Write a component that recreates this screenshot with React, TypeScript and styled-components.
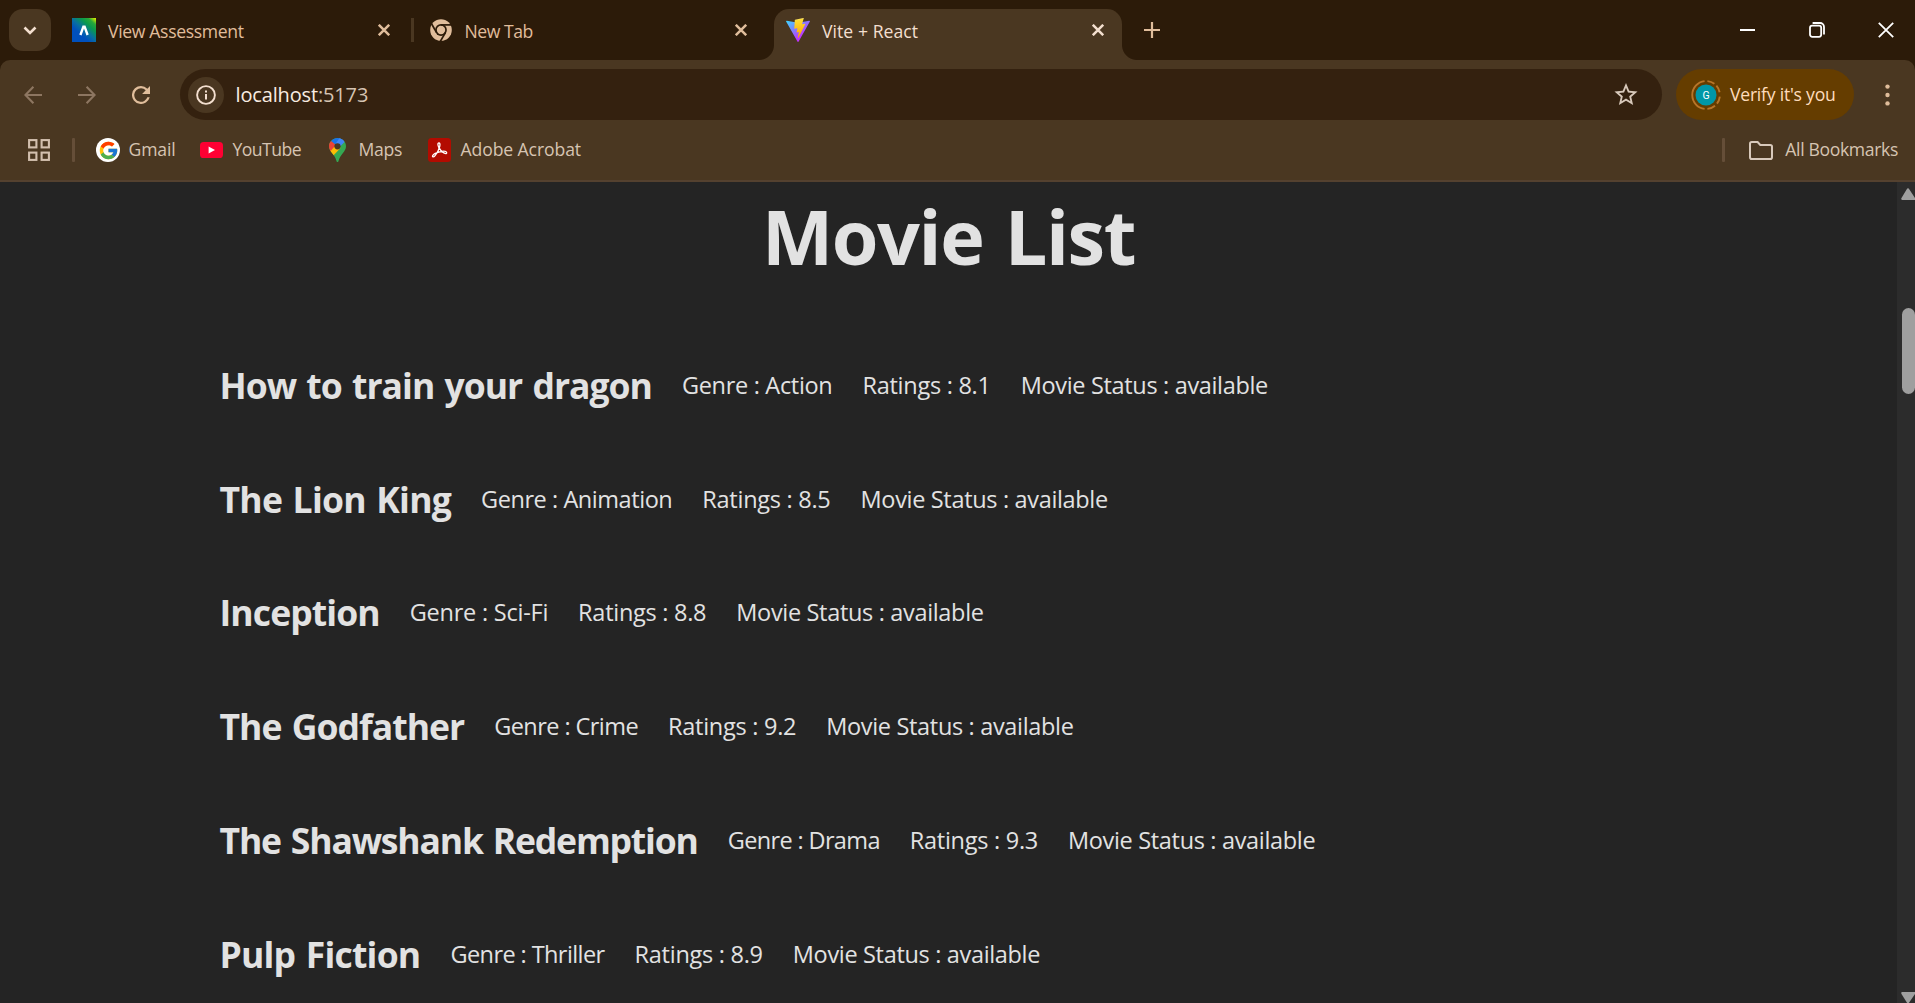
import React from 'react';
import styled, { createGlobalStyle } from 'styled-components';
import { FcGoogle } from 'react-icons/fc';

const GlobalStyle = createGlobalStyle`
  * { box-sizing: border-box; }
  body {
    margin: 0;
    background: #242424;
    font-family: "Open Sans", "Noto Sans", sans-serif;
    overflow: hidden;
  }
  svg { display: block; flex: none; }
`;

const Browser = styled.div`
  display: flex;
  flex-direction: column;
  width: 1915px;
  height: 1003px;
  overflow: hidden;
  background: #2c1b09;
`;

const TabStrip = styled.div`
  display: flex;
  align-items: flex-start;
  height: 60px;
  padding: 9px 0 0 9px;
  flex: none;
`;

const TabSearch = styled.div`
  display: flex;
  align-items: center;
  justify-content: center;
  width: 42px;
  height: 42px;
  border-radius: 14px;
  background: #4a3721;
`;

const Tab = styled.div<{ $active?: boolean; $width: number; $indent: number }>`
  position: relative;
  display: flex;
  align-items: center;
  width: ${(p) => p.$width}px;
  height: 51px;
  margin-left: ${(p) => (p.$active ? 9 : 0)}px;
  padding: 0 18px 9px ${(p) => p.$indent}px;
  border-radius: 15px 15px 0 0;
  background: ${(p) => (p.$active ? '#4a3721' : 'transparent')};
  color: ${(p) => (p.$active ? '#f3dfcf' : '#e0bd9b')};
`;

const TabFoot = styled.i<{ $side: 'left' | 'right' }>`
  position: absolute;
  bottom: 0;
  ${(p) => p.$side}: -15px;
  width: 15px;
  height: 15px;
  background: radial-gradient(
    circle at ${(p) => (p.$side === 'left' ? '0 0' : '100% 0')},
    transparent 14.5px,
    #4a3721 15.5px
  );
`;

const TabTitle = styled.span<{ $track: number; $gap?: number }>`
  flex: 1;
  margin-left: ${(p) => p.$gap ?? 12}px;
  padding-top: 1px;
  font-size: 17.6px;
  line-height: 24px;
  letter-spacing: ${(p) => p.$track}px;
  white-space: nowrap;
`;

const TabDivider = styled.div`
  width: 3px;
  height: 24px;
  margin: 9px 0 0 3px;
  background: #4a3721;
`;

const NewTabButton = styled.div`
  padding: 13px 0 0 22px;
  color: #e0bd9b;
`;

const WindowControls = styled.div`
  display: flex;
  align-items: center;
  gap: 53px;
  height: 42px;
  margin-left: auto;
  padding: 0 21px 1px 0;
`;

const Chrome = styled.div`
  flex: none;
  height: 122px;
  border-radius: 10px 10px 0 0;
  border-bottom: 2px solid #54412f;
  background: #4a3721;
`;

const Toolbar = styled.div`
  display: flex;
  align-items: center;
  height: 69px;
  padding: 9px 0 9px 24px;
`;

const NavButtons = styled.div`
  display: flex;
  align-items: center;
  gap: 36px;
  width: 156px;
`;

const Omnibox = styled.div`
  display: flex;
  align-items: center;
  width: 1482px;
  height: 51px;
  padding: 0 24px 0 7px;
  border-radius: 26px;
  background: #34210f;
  color: #d8c9bb;
`;

const SiteInfo = styled.div`
  display: flex;
  align-items: center;
  justify-content: center;
  width: 36px;
  height: 36px;
  margin-left: 0.5px;
  border-radius: 50%;
  background: #4a3721;
`;

const Address = styled.span`
  flex: 1;
  margin-left: 12px;
  font-size: 20px;
  line-height: 27px;
  letter-spacing: -0.15px;
  color: #d6c4b2;
`;

const Host = styled.span`
  color: #f8ece1;
`;

const VerifyPill = styled.div`
  display: flex;
  align-items: center;
  width: 178px;
  height: 51px;
  margin: 0 31px 0 13.5px;
  padding-left: 15.5px;
  border-radius: 26px;
  background: #653d00;
  color: #ffdcbc;
`;

const VerifyText = styled.span`
  margin-left: 9px;
  padding-bottom: 2px;
  font-size: 17.6px;
  letter-spacing: -0.23px;
  white-space: nowrap;
`;

const BookmarksBar = styled.div`
  display: flex;
  align-items: center;
  height: 42px;
  padding: 0 17px 0 28px;
`;

const BarDivider = styled.div<{ $margin: string }>`
  width: 3px;
  height: 24px;
  margin: ${(p) => p.$margin};
  border-radius: 1px;
  background: #654e38;
`;

const Bookmark = styled.div<{ $width?: number; $gap: number }>`
  display: flex;
  align-items: center;
  gap: ${(p) => p.$gap}px;
  width: ${(p) => (p.$width ? `${p.$width}px` : 'auto')};
  color: #d6c4b2;
`;

const BookmarkLabel = styled.span<{ $track: number }>`
  padding-bottom: 2px;
  font-size: 17.6px;
  line-height: 24px;
  letter-spacing: ${(p) => p.$track}px;
  white-space: nowrap;
`;

const GoogleBadge = styled.span`
  display: flex;
  align-items: center;
  justify-content: center;
  width: 24px;
  height: 24px;
  border-radius: 50%;
  background: #fff;
`;

const Spacer = styled.div`
  flex: 1;
`;

const Viewport = styled.div`
  display: flex;
  flex: 1;
  min-height: 0;
  background: #242424;
`;

const Page = styled.main`
  flex: 1;
  overflow: hidden;
  padding-top: 12px;
  color: #e2e2e2;
`;

const Heading = styled.h1`
  margin: 0 0 49.5px;
  font-size: 75.5px;
  font-weight: 700;
  line-height: 84.5px;
  letter-spacing: -1.4px;
  word-spacing: 3px;
  text-align: center;
`;

const MovieRow = styled.section`
  display: flex;
  align-items: center;
  gap: 30px;
  height: 113.76px;
  padding-left: 219.5px;
  white-space: nowrap;
`;

const MovieTitle = styled.h2<{ $track: number }>`
  margin: 0;
  font-size: 35.5px;
  font-weight: 700;
  line-height: 54px;
  letter-spacing: ${(p) => p.$track}px;
  word-spacing: 2px;
`;

const Detail = styled.p<{ $track: number }>`
  margin: 0;
  font-size: 23.5px;
  line-height: 36px;
  letter-spacing: ${(p) => p.$track}px;
`;

const Scrollbar = styled.div`
  display: flex;
  flex-direction: column;
  align-items: flex-end;
  width: 18px;
  padding-top: 6px;
  background: #2c2c2c;
`;

const ScrollThumb = styled.div`
  width: 13px;
  height: 86px;
  margin: 108px 0 auto;
  border-radius: 7px;
  background: #9f9f9f;
`;

const Cross = ({ size = 12, width = 2.5, color = 'currentColor' }) => (
  <svg width={size} height={size} viewBox={`0 0 ${size} ${size}`} stroke={color} strokeWidth={width}>
    <path d={`M.8 .8L${size - 0.8} ${size - 0.8}M${size - 0.8} .8L.8 ${size - 0.8}`} />
  </svg>
);

const AssessmentIcon = () => (
  <svg width="24" height="24" viewBox="0 0 24 24">
    <defs>
      <linearGradient id="assess" x1="0.15" y1="0.9" x2="0.95" y2="0">
        <stop offset="0.25" stopColor="#0050bd" />
        <stop offset="0.45" stopColor="#0870a0" />
        <stop offset="0.68" stopColor="#0a9a4c" />
        <stop offset="0.84" stopColor="#28a83a" />
        <stop offset="1" stopColor="#d5ec00" />
      </linearGradient>
    </defs>
    <rect width="24" height="24" fill="url(#assess)" />
    <path d="M8.4 17L11.4 8.6H12.6L15.6 17" fill="none" stroke="#fff" strokeWidth="2.4" />
  </svg>
);

const ChromeIcon = () => (
  <svg width="22" height="22" viewBox="0 0 22 22">
    <circle cx="11" cy="11" r="10.8" fill="currentColor" />
    <circle cx="11" cy="11" r="5.9" fill="#2c1b09" />
    <circle cx="11" cy="11" r="4.2" fill="currentColor" />
    <g stroke="#2c1b09" strokeWidth="1.7">
      <path d="M11 5.9H22" />
      <path d="M11 5.9H22" transform="rotate(120 11 11)" />
      <path d="M11 5.9H22" transform="rotate(240 11 11)" />
    </g>
  </svg>
);

const ViteIcon = () => (
  <svg width="24" height="24" viewBox="0 0 256 257">
    <defs>
      <linearGradient id="viteA" x1="-.828%" x2="57.636%" y1="7.652%" y2="78.411%">
        <stop offset="0%" stopColor="#41D1FF" />
        <stop offset="100%" stopColor="#BD34FE" />
      </linearGradient>
      <linearGradient id="viteB" x1="43.376%" x2="50.316%" y1="2.242%" y2="89.03%">
        <stop offset="0%" stopColor="#FFEA83" />
        <stop offset="8.333%" stopColor="#FFDD35" />
        <stop offset="100%" stopColor="#FFA800" />
      </linearGradient>
    </defs>
    <path fill="url(#viteA)" d="M255.153 37.938L134.897 252.976c-2.483 4.44-8.862 4.466-11.382.048L.875 37.958c-2.746-4.814 1.371-10.646 6.827-9.67l120.385 21.517a6.537 6.537 0 0 0 2.322-.004l117.867-21.483c5.438-.991 9.574 4.796 6.877 9.62Z" />
    <path fill="url(#viteB)" d="M185.432.063L96.44 17.501a3.268 3.268 0 0 0-2.634 3.014l-5.474 92.456a3.268 3.268 0 0 0 3.997 3.378l24.777-5.718c2.318-.535 4.413 1.507 3.936 3.838l-7.361 36.047c-.495 2.426 1.782 4.5 4.151 3.78l15.304-4.649c2.372-.72 4.652 1.36 4.15 3.788l-11.698 56.621c-.732 3.542 3.979 5.473 5.943 2.437l1.313-2.028l72.516-144.72c1.215-2.423-.88-5.186-3.54-4.672l-25.505 4.922c-2.396.462-4.435-1.77-3.759-4.114l16.646-57.705c.677-2.35-1.37-4.583-3.769-4.113Z" />
  </svg>
);

const YouTubeIcon = () => (
  <svg width="23" height="16" viewBox="0 0 23 16">
    <rect width="23" height="16" rx="3.6" fill="#ff0033" />
    <path d="M8.6 4.4L15 8L8.6 11.6Z" fill="#fff" />
  </svg>
);

const MapsIcon = () => (
  <svg width="17" height="24" viewBox="0 0 17 24">
    <defs>
      <clipPath id="pin">
        <path d="M8.5 0C3.8 0 0 3.7 0 8.3C0 11 1.3 12.9 3.2 15.2C5.5 18 6.6 19.6 7.4 22.7C7.7 23.7 8 24 8.5 24S9.3 23.7 9.6 22.7C10.4 19.6 11.5 18 13.8 15.2C15.7 12.9 17 11 17 8.3C17 3.7 13.2 0 8.5 0Z" />
      </clipPath>
    </defs>
    <g clipPath="url(#pin)">
      <rect width="17" height="24" fill="#34a853" />
      <path d="M0 13L8.5 3.5L11.5 10L3 19L0 16Z" fill="#fbbc04" />
      <path d="M-1 1.5L2.2 2.7L7 6.8L0 15Z" fill="#ea4335" />
      <path d="M2.1 2.9L5 -1H13L15 3.6L9.5 9.5L7 7Z" fill="#1a73e8" />
      <path d="M10.5 0L17 0L15.6 4L9.5 10L6.5 6Z" fill="#4285f4" />
    </g>
    <circle cx="8.5" cy="8.3" r="3.1" fill="#4a3721" />
  </svg>
);

const AcrobatIcon = () => (
  <svg width="23" height="24" viewBox="0 0 23 24" fill="none" stroke="#fff" strokeWidth="1.3" strokeLinejoin="round">
    <rect width="23" height="24" rx="3.5" fill="#b30b00" stroke="none" />
    <path d="M10.9 5C9.4 5 9.8 7.4 10.9 9.6C12.1 12 14.3 14.2 16.3 15.2C17.9 16 18.9 15.6 18.7 14.6C18.4 13.3 15 13.1 11.8 13.8C8.7 14.5 5.2 16.2 4.6 17.7C4.1 19 5.5 19.6 6.9 17.9C8.8 15.7 10.9 11.6 11.7 8.5C12.2 6.4 12 5 10.9 5Z" />
  </svg>
);

const AvatarRing = () => (
  <svg width="30" height="30" viewBox="0 0 30 30">
    <g fill="none" stroke="#b87528" strokeWidth="1.9">
      <path d="M13.6 1.1A14 14 0 0 0 13.6 28.9" />
      <path d="M16.4 1.1A14 14 0 0 1 23.4 3.8" />
      <path d="M25.4 5.6A14 14 0 0 1 28.6 12.2" />
      <path d="M28.8 16.6A14 14 0 0 1 26 23.6" />
      <path d="M24 25.7A14 14 0 0 1 16.4 28.9" />
    </g>
    <circle cx="15" cy="15" r="10.5" fill="#0097a7" />
    <text x="15" y="18.7" textAnchor="middle" fill="#fff" fontFamily="Roboto, sans-serif" fontSize="10.5">G</text>
  </svg>
);

type Movie = { title: string; track: number; genre: string; genreTrack: number; rating: string };

const movies: Movie[] = [
  { title: 'How to train your dragon', track: -0.98, genre: 'Action', genreTrack: -0.31, rating: '8.1' },
  { title: 'The Lion King', track: -0.75, genre: 'Animation', genreTrack: -0.44, rating: '8.5' },
  { title: 'Inception', track: -0.9, genre: 'Sci-Fi', genreTrack: -0.23, rating: '8.8' },
  { title: 'The Godfather', track: -0.97, genre: 'Crime', genreTrack: -0.56, rating: '9.2' },
  { title: 'The Shawshank Redemption', track: -1.18, genre: 'Drama', genreTrack: -0.64, rating: '9.3' },
  { title: 'Pulp Fiction', track: -0.78, genre: 'Thriller', genreTrack: -0.58, rating: '8.9' },
];

export default function App() {
  return (
    <Browser>
      <GlobalStyle />
      <TabStrip>
        <TabSearch>
          <svg width="14" height="9" viewBox="0 0 14 9" fill="none" stroke="#f3dfcf" strokeWidth="2.6">
            <path d="M1.5 1.5L7 7L12.5 1.5" />
          </svg>
        </TabSearch>
        <Tab $width={357} $indent={21}>
          <AssessmentIcon />
          <TabTitle $track={-0.34}>View Assessment</TabTitle>
          <Cross />
        </Tab>
        <TabDivider />
        <Tab $width={351} $indent={16}>
          <ChromeIcon />
          <TabTitle $track={-0.45} $gap={12.5}>New Tab</TabTitle>
          <Cross />
        </Tab>
        <Tab $active $width={348} $indent={12}>
          <TabFoot $side="left" />
          <ViteIcon />
          <TabTitle $track={0.05}>Vite + React</TabTitle>
          <Cross />
          <TabFoot $side="right" />
        </Tab>
        <NewTabButton>
          <svg width="16" height="16" viewBox="0 0 16 16" stroke="currentColor" strokeWidth="2.2">
            <path d="M8 0V16M0 8H16" />
          </svg>
        </NewTabButton>
        <WindowControls>
          <svg width="16" height="2" viewBox="0 0 16 2">
            <rect width="15" height="2" fill="#fff" />
          </svg>
          <svg width="16" height="16" viewBox="0 0 16 16" fill="none" stroke="#fff" strokeWidth="1.8">
            <rect x="1" y="3.6" width="11.2" height="11.2" rx="2.2" />
            <path d="M3.6 1H11A4 4 0 0 1 15 5V12.4" />
          </svg>
          <Cross size={16} width={1.8} color="#fff" />
        </WindowControls>
      </TabStrip>

      <Chrome>
        <Toolbar>
          <NavButtons>
            <svg width="18" height="18" viewBox="0 0 18 18" fill="none" stroke="#8d7661" strokeWidth="2.1">
              <path d="M18 9H1.6M9.4 .8L1.4 9L9.4 17.2" />
            </svg>
            <svg width="18" height="18" viewBox="0 0 18 18" fill="none" stroke="#8d7661" strokeWidth="2.1">
              <path d="M0 9H16.4M8.6 .8L16.6 9L8.6 17.2" />
            </svg>
            <svg width="18" height="18" viewBox="4 4 16 16" fill="#e0bd9b">
              <path d="M17.65 6.35A7.958 7.958 0 0 0 12 4a8 8 0 1 0 7.73 10h-2.08A6 6 0 1 1 12 6c1.66 0 3.14.69 4.22 1.78L13 11h7V4l-2.35 2.35z" />
            </svg>
          </NavButtons>
          <Omnibox>
            <SiteInfo>
              <svg width="20" height="20" viewBox="0 0 20 20">
                <circle cx="10" cy="10" r="8.9" fill="none" stroke="#f3dfcf" strokeWidth="1.9" />
                <path d="M9 9H11V14.6H9ZM9 5.4H11V7.5H9Z" fill="#f3dfcf" />
              </svg>
            </SiteInfo>
            <Address>
              <Host>localhost</Host>:5173
            </Address>
            <svg width="24" height="23" viewBox="1.6 2 20.8 19.8" fill="#d8c9bb">
              <path d="M22 9.24l-7.19-.62L12 2 9.19 8.63 2 9.24l5.46 4.73L5.82 21 12 17.27 18.18 21l-1.63-7.03L22 9.24zM12 15.4l-3.76 2.27 1-4.28-3.32-2.88 4.38-.38L12 6.1l1.71 4.04 4.38.38-3.32 2.88 1 4.28L12 15.4z" />
            </svg>
          </Omnibox>
          <VerifyPill>
            <AvatarRing />
            <VerifyText>Verify it's you</VerifyText>
          </VerifyPill>
          <svg width="5" height="22" viewBox="0 0 5 22" fill="#e0bd9b">
            <circle cx="2.5" cy="2.6" r="2.2" />
            <circle cx="2.5" cy="11" r="2.2" />
            <circle cx="2.5" cy="19.4" r="2.2" />
          </svg>
        </Toolbar>

        <BookmarksBar>
          <svg width="22" height="22" viewBox="0 0 22 22" fill="none" stroke="#d2bfae" strokeWidth="2.1">
            <rect x="1.1" y="1.1" width="7.3" height="7.3" />
            <rect x="13.6" y="1.1" width="7.3" height="7.3" />
            <rect x="1.1" y="13.6" width="7.3" height="7.3" />
            <rect x="13.6" y="13.6" width="7.3" height="7.3" />
          </svg>
          <BarDivider $margin="0 21px 0 22px" />
          <Bookmark $width={104} $gap={8.5}>
            <GoogleBadge>
              <FcGoogle size={21} />
            </GoogleBadge>
            <BookmarkLabel $track={-0.15}>Gmail</BookmarkLabel>
          </Bookmark>
          <Bookmark $width={129} $gap={9.5}>
            <YouTubeIcon />
            <BookmarkLabel $track={-0.55}>YouTube</BookmarkLabel>
          </Bookmark>
          <Bookmark $width={99} $gap={12.5}>
            <MapsIcon />
            <BookmarkLabel $track={-0.3}>Maps</BookmarkLabel>
          </Bookmark>
          <Bookmark $gap={9.5}>
            <AcrobatIcon />
            <BookmarkLabel $track={-0.1}>Adobe Acrobat</BookmarkLabel>
          </Bookmark>
          <Spacer />
          <BarDivider $margin="0 24px 0 0" />
          <Bookmark $gap={12}>
            <svg width="24" height="19" viewBox="0 0 24 19" fill="none" stroke="#d8c9bb" strokeWidth="2">
              <path d="M1 16.2V2.8Q1 1 2.8 1H8.6L11.3 4H21.2Q23 4 23 5.8V16.2Q23 18 21.2 18H2.8Q1 18 1 16.2Z" />
            </svg>
            <BookmarkLabel $track={-0.35}>All Bookmarks</BookmarkLabel>
          </Bookmark>
        </BookmarksBar>
      </Chrome>

      <Viewport>
        <Page>
          <Heading>Movie List</Heading>
          {movies.map((m) => (
            <MovieRow key={m.title}>
              <MovieTitle $track={m.track}>{m.title}</MovieTitle>
              <Detail $track={m.genreTrack}>Genre : {m.genre}</Detail>
              <Detail $track={-0.27}>Ratings : {m.rating}</Detail>
              <Detail $track={-0.33}>Movie Status : available</Detail>
            </MovieRow>
          ))}
        </Page>
        <Scrollbar>
          <svg width="14" height="12" viewBox="0 0 14 12" fill="#9f9f9f">
            <path d="M5.6 1.4Q7 -.8 8.4 1.4L14 10V12H1.2Q-.4 11.6 .5 10Z" />
          </svg>
          <ScrollThumb />
          <svg width="14" height="12" viewBox="0 0 14 12" fill="#9f9f9f">
            <path d="M1 1H14V3L8.2 11.5Q7 13 5.8 11.5L.5 3Q-.2 1.4 1 1Z" />
          </svg>
        </Scrollbar>
      </Viewport>
    </Browser>
  );
}
